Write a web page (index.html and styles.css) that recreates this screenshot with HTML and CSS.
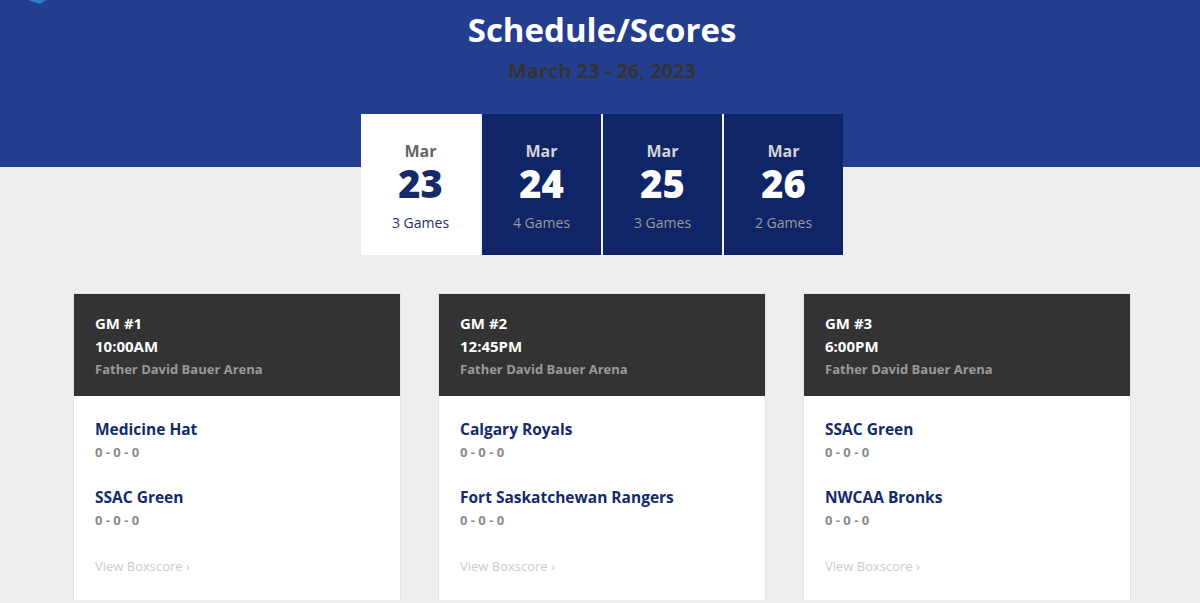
FILE: index.html
```html
<!DOCTYPE html>
<html lang="en">
<head>
<meta charset="utf-8">
<title>Schedule/Scores</title>
<link rel="stylesheet" href="styles.css">
</head>
<body>
<div class="page">
  <header class="hero">
    <svg class="corner-mark" width="48" height="6" viewBox="0 0 48 6" aria-hidden="true">
      <polygon points="28,0 46,0 40,4" fill="#2f7fd0"/>
    </svg>
    <h1 class="hero-title">Schedule/Scores</h1>
    <p class="hero-dates">March 23 - 26, 2023</p>
  </header>

  <nav class="days">
    <div class="days-row">
      <a class="day day-active" href="#">
        <span class="day-month">Mar</span>
        <span class="day-num">23</span>
        <span class="day-count">3 Games</span>
      </a>
      <a class="day" href="#">
        <span class="day-month">Mar</span>
        <span class="day-num">24</span>
        <span class="day-count">4 Games</span>
      </a>
      <a class="day" href="#">
        <span class="day-month">Mar</span>
        <span class="day-num">25</span>
        <span class="day-count">3 Games</span>
      </a>
      <a class="day" href="#">
        <span class="day-month">Mar</span>
        <span class="day-num">26</span>
        <span class="day-count">2 Games</span>
      </a>
    </div>
  </nav>

  <section class="games">
    <article class="game">
      <div class="game-head">
        <div class="game-no">GM #1</div>
        <div class="game-time">10:00AM</div>
        <div class="game-venue">Father David Bauer Arena</div>
      </div>
      <div class="game-body">
        <div class="team">
          <div class="team-name">Medicine Hat</div>
          <div class="team-record">0 - 0 - 0</div>
        </div>
        <div class="team">
          <div class="team-name">SSAC Green</div>
          <div class="team-record">0 - 0 - 0</div>
        </div>
        <a class="boxscore" href="#">View Boxscore ›</a>
      </div>
    </article>

    <article class="game">
      <div class="game-head">
        <div class="game-no">GM #2</div>
        <div class="game-time">12:45PM</div>
        <div class="game-venue">Father David Bauer Arena</div>
      </div>
      <div class="game-body">
        <div class="team">
          <div class="team-name">Calgary Royals</div>
          <div class="team-record">0 - 0 - 0</div>
        </div>
        <div class="team">
          <div class="team-name">Fort Saskatchewan Rangers</div>
          <div class="team-record">0 - 0 - 0</div>
        </div>
        <a class="boxscore" href="#">View Boxscore ›</a>
      </div>
    </article>

    <article class="game">
      <div class="game-head">
        <div class="game-no">GM #3</div>
        <div class="game-time">6:00PM</div>
        <div class="game-venue">Father David Bauer Arena</div>
      </div>
      <div class="game-body">
        <div class="team">
          <div class="team-name">SSAC Green</div>
          <div class="team-record">0 - 0 - 0</div>
        </div>
        <div class="team">
          <div class="team-name">NWCAA Bronks</div>
          <div class="team-record">0 - 0 - 0</div>
        </div>
        <a class="boxscore" href="#">View Boxscore ›</a>
      </div>
    </article>
  </section>
</div>
</body>
</html>
```

FILE: styles.css
```css
* {
  box-sizing: border-box;
}

html, body {
  margin: 0;
  padding: 0;
}

body {
  background: #eeeeee;
  font-family: "Open Sans", "Liberation Sans", sans-serif;
  color: #333;
  overflow: hidden;
}

.page {
  position: relative;
  padding-left: 4px;
}

/* blue band behind the title and the day tabs */
.page::before {
  content: "";
  position: absolute;
  left: 0;
  right: 0;
  top: 0;
  height: 167px;
  background: #243e8f;
  z-index: 0;
}

.hero {
  position: relative;
  z-index: 1;
  text-align: center;
  padding-top: 8px;
}

.corner-mark {
  position: absolute;
  left: -4px;
  top: 0;
}

.hero-title {
  margin: 0;
  font-size: 33px;
  line-height: 44px;
  font-weight: 700;
  color: #ffffff;
}

.hero-dates {
  margin: 5px 0 0;
  font-size: 20px;
  line-height: 28px;
  font-weight: 700;
  color: #333333;
}

/* day tabs */
.days {
  position: relative;
  z-index: 1;
  display: flex;
  justify-content: center;
  margin-top: 29px;
}

.days-row {
  display: flex;
  gap: 2px;
  background: #f2f2f2;
}

.day {
  width: 119px;
  height: 141px;
  display: flex;
  flex-direction: column;
  align-items: center;
  padding-top: 27px;
  background: #0f2567;
  text-decoration: none;
}

.day-month {
  font-size: 16px;
  line-height: 20px;
  font-weight: 700;
  color: #d4d4d4;
}

.day-num {
  font-size: 38px;
  line-height: 44px;
  font-weight: 800;
  color: #ffffff;
}

.day-count {
  margin-top: 8px;
  font-size: 14px;
  line-height: 20px;
  color: #9a9a9a;
}

.day-active {
  background: #ffffff;
}

.day-active .day-month {
  color: #666666;
}

.day-active .day-num {
  color: #162a6b;
}

.day-active .day-count {
  color: #1e2f6e;
}

/* game cards */
.games {
  display: flex;
  justify-content: center;
  gap: 37px;
  margin-top: 38px;
}

.game {
  width: 328px;
  height: 307px;
  background: #ffffff;
  border: 1px solid #e2e2e2;
  border-bottom: none;
}

.game-head {
  background: #333333;
  height: 102px;
  padding: 18px 21px 0;
  color: #ffffff;
}

.game-no,
.game-time {
  font-size: 15px;
  line-height: 23px;
  font-weight: 700;
}

.game-venue {
  font-size: 13px;
  line-height: 23px;
  font-weight: 700;
  color: #999999;
}

.game-body {
  padding: 21px 21px 0;
  display: flex;
  flex-direction: column;
}

.team {
  margin-bottom: 21px;
}

.team-name {
  font-size: 15.5px;
  line-height: 24px;
  font-weight: 700;
  color: #132a6b;
}

.team-record {
  font-size: 13px;
  line-height: 23px;
  font-weight: 700;
  color: #8a8a8a;
}

.boxscore {
  margin-top: 2px;
  font-size: 13px;
  line-height: 23px;
  color: #cccccc;
  text-decoration: none;
}
```
